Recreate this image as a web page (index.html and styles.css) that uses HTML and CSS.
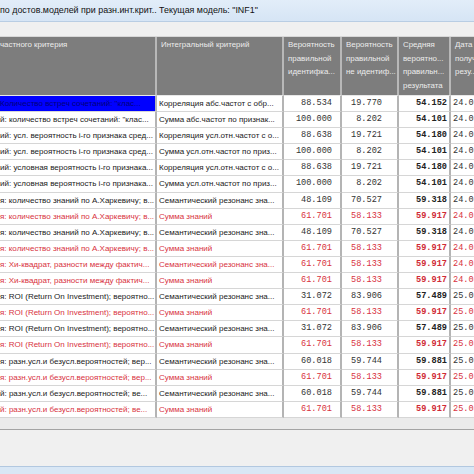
FILE: index.html
```html
<!DOCTYPE html>
<html>
<head>
<meta charset="utf-8">
<link rel="stylesheet" href="styles.css">
</head>
<body>
<div class="page">
  <div class="titlebar">по достов.моделей при разн.инт.крит.. Текущая модель: "INF1"</div>
  <div class="toolbar"></div>
  <div class="grid">
    <div class="hc c1">частного критерия</div>
    <div class="hc">Интегральный критерий</div>
    <div class="hc">Вероятность<br>правильной<br>идентифка...</div>
    <div class="hc">Вероятность<br>правильной<br>не идентиф...</div>
    <div class="hc">Средняя<br>вероятно...<br>правильн...<br>результата</div>
    <div class="hc last">Дата<br>получ...<br>резу...</div>

    <div class="t c1 sel">Количество встреч сочетаний: "клас...</div><div class="t">Корреляция абс.частот с обр...</div><div class="n n3">88.534</div><div class="n n4">19.770</div><div class="n n5">54.152</div><div class="n d">24.04.2012</div>
    <div class="t c1">й: количество встреч сочетаний: "клас...</div><div class="t">Сумма абс.частот по признак...</div><div class="n n3">100.000</div><div class="n n4">8.202</div><div class="n n5">54.101</div><div class="n d">24.04.2012</div>
    <div class="t c1">ий: усл. вероятность i-го признака сред...</div><div class="t">Корреляция усл.отн.частот с о...</div><div class="n n3">88.638</div><div class="n n4">19.721</div><div class="n n5">54.180</div><div class="n d">24.04.2012</div>
    <div class="t c1">ий: усл. вероятность i-го признака сред...</div><div class="t">Сумма усл.отн.частот по приз...</div><div class="n n3">100.000</div><div class="n n4">8.202</div><div class="n n5">54.101</div><div class="n d">24.04.2012</div>
    <div class="t c1">ий: условная вероятность i-го признака...</div><div class="t">Корреляция усл.отн.частот с о...</div><div class="n n3">88.638</div><div class="n n4">19.721</div><div class="n n5">54.180</div><div class="n d">24.04.2012</div>
    <div class="t c1">ий: условная вероятность i-го признака...</div><div class="t">Сумма усл.отн.частот по приз...</div><div class="n n3">100.000</div><div class="n n4">8.202</div><div class="n n5">54.101</div><div class="n d">24.04.2012</div>
    <div class="t c1">я: количество знаний по А.Харкевичу; в...</div><div class="t">Семантический резонанс зна...</div><div class="n n3">48.109</div><div class="n n4">70.527</div><div class="n n5">59.318</div><div class="n d">24.04.2012</div>
    <div class="t c1 r">я: количество знаний по А.Харкевичу; в...</div><div class="t r">Сумма знаний</div><div class="n n3 r">61.701</div><div class="n n4 r">58.133</div><div class="n n5 r">59.917</div><div class="n d r">24.04.2012</div>
    <div class="t c1">я: количество знаний по А.Харкевичу; в...</div><div class="t">Семантический резонанс зна...</div><div class="n n3">48.109</div><div class="n n4">70.527</div><div class="n n5">59.318</div><div class="n d">24.04.2012</div>
    <div class="t c1 r">я: количество знаний по А.Харкевичу; в...</div><div class="t r">Сумма знаний</div><div class="n n3 r">61.701</div><div class="n n4 r">58.133</div><div class="n n5 r">59.917</div><div class="n d r">24.04.2012</div>
    <div class="t c1 r">я: Хи-квадрат, разности между фактич...</div><div class="t r">Семантический резонанс зна...</div><div class="n n3 r">61.701</div><div class="n n4 r">58.133</div><div class="n n5 r">59.917</div><div class="n d r">24.04.2012</div>
    <div class="t c1 r">я: Хи-квадрат, разности между фактич...</div><div class="t r">Сумма знаний</div><div class="n n3 r">61.701</div><div class="n n4 r">58.133</div><div class="n n5 r">59.917</div><div class="n d r">24.04.2012</div>
    <div class="t c1">я: ROI (Return On Investment); вероятно...</div><div class="t">Семантический резонанс зна...</div><div class="n n3">31.072</div><div class="n n4">83.906</div><div class="n n5">57.489</div><div class="n d">25.04.2012</div>
    <div class="t c1 r">я: ROI (Return On Investment); вероятно...</div><div class="t r">Сумма знаний</div><div class="n n3 r">61.701</div><div class="n n4 r">58.133</div><div class="n n5 r">59.917</div><div class="n d r">25.04.2012</div>
    <div class="t c1">я: ROI (Return On Investment); вероятно...</div><div class="t">Семантический резонанс зна...</div><div class="n n3">31.072</div><div class="n n4">83.906</div><div class="n n5">57.489</div><div class="n d">25.04.2012</div>
    <div class="t c1 r">я: ROI (Return On Investment); вероятно...</div><div class="t r">Сумма знаний</div><div class="n n3 r">61.701</div><div class="n n4 r">58.133</div><div class="n n5 r">59.917</div><div class="n d r">25.04.2012</div>
    <div class="t c1">я: разн.усл.и безусл.вероятностей; вер...</div><div class="t">Семантический резонанс зна...</div><div class="n n3">60.018</div><div class="n n4">59.744</div><div class="n n5">59.881</div><div class="n d">25.04.2012</div>
    <div class="t c1 r">я: разн.усл.и безусл.вероятностей; вер...</div><div class="t r">Сумма знаний</div><div class="n n3 r">61.701</div><div class="n n4 r">58.133</div><div class="n n5 r">59.917</div><div class="n d r">25.04.2012</div>
    <div class="t c1">й: разн.усл.и безусл.вероятностей; ве...</div><div class="t">Семантический резонанс зна...</div><div class="n n3">60.018</div><div class="n n4">59.744</div><div class="n n5">59.881</div><div class="n d">25.04.2012</div>
    <div class="t c1 r">й: разн.усл.и безусл.вероятностей; ве...</div><div class="t r">Сумма знаний</div><div class="n n3 r">61.701</div><div class="n n4 r">58.133</div><div class="n n5 r">59.917</div><div class="n d r">25.04.2012</div>
  </div>
  <div class="gridfoot"></div>
  <div class="panel"></div>
  <div class="status"></div>
</div>
</body>
</html>
```

FILE: styles.css
```css
html, body {
  margin: 0;
  padding: 0;
  background: #f0f0f0;
}
.page {
  width: 474px;
  height: 474px;
  overflow: hidden;
  display: flex;
  flex-direction: column;
  font-family: "Liberation Sans", Arial, sans-serif;
  font-size: 8px;
}
.titlebar {
  height: 21px;
  line-height: 20px;
  background: linear-gradient(#e2edf9, #d6e5f5);
  border-bottom: 1px solid #b9cde3;
  color: #111;
  white-space: nowrap;
  font-size: 8.9px;
  flex: none;
}
.toolbar {
  height: 14px;
  background: #f0f0f0;
  border-bottom: 1px solid #d8d8d8;
  flex: none;
}
.grid {
  display: grid;
  grid-template-columns: 157px 127px 58px 57px 52px 23px;
  grid-template-rows: 59px repeat(20, 16.1px);
  background: #f0f0f0;
  flex: none;
}
.hc {
  background: #7d7d7d;
  color: #ececec;
  padding: 1px 0 0 4px;
  line-height: 13.6px;
  border-right: 2px solid #b8b8b8;
  border-bottom: 1px solid #e8e8e8;
  white-space: nowrap;
  overflow: hidden;
  font-size: 7.9px;
}
.hc.c1 { padding-left: 0; }
.hc.last { border-right: none; }
.t, .n {
  background: #fff;
  border-right: 2px solid #b4b4b4;
  border-bottom: 1px solid #d6d6d6;
  white-space: nowrap;
  overflow: hidden;
  line-height: 15px;
  color: #1a1a1a;
}
.t { padding-left: 2px; font-size: 8px; }
.t.c1 { padding-left: 0; }
.n {
  font-family: "Liberation Mono", "Courier New", monospace;
  font-size: 8.6px;
  text-align: right;
  color: #333;
}
.n3 { padding-right: 8px; }
.n4 { padding-right: 15px; }
.n5 { padding-right: 2px; font-weight: bold; color: #222; }
.d { text-align: left; padding-left: 2px; border-right: none; }
.r { color: #d8323e; }
.n5.r { color: #d02a36; }
.sel { background: #0000ff; color: #00007a; }
.gridfoot {
  height: 11px;
  background: #ebebeb;
  border-bottom: 1px solid #a4a4a4;
  flex: none;
}
.panel {
  height: 36px;
  background: #f0f0f0;
  flex: none;
}
.status {
  flex: 1;
  background: #d9e7f5;
  border-top: 1px solid #b2c8e0;
}
```
